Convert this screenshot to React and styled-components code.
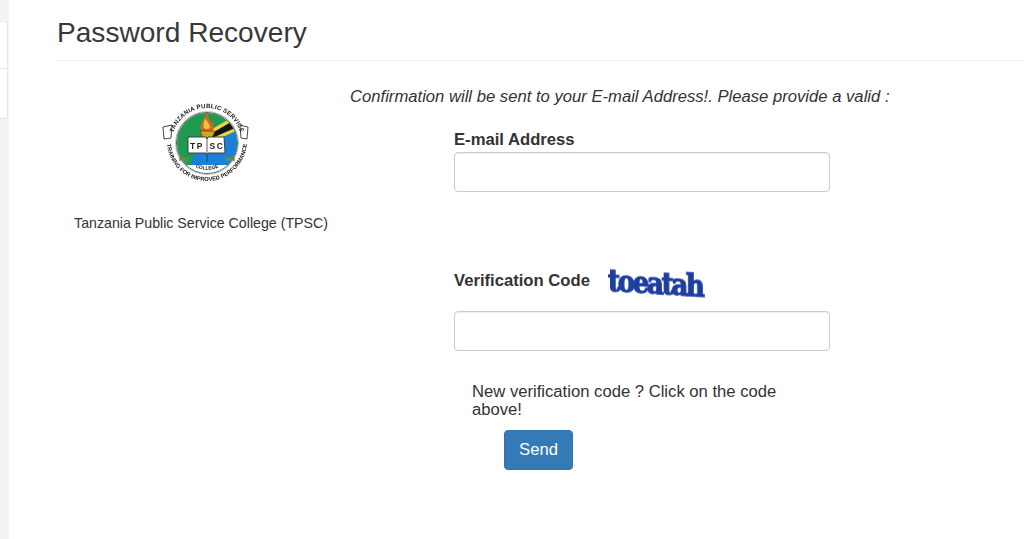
import React from "react";
import styled, { createGlobalStyle } from "styled-components";

const Global = createGlobalStyle`
  html, body { margin: 0; padding: 0; background: #fff; }
  body { font-family: "Liberation Sans", Arial, sans-serif; color: #333; font-size: 14px; overflow: hidden; }
  * { box-sizing: border-box; }
`;
const Page = styled.div`display: flex; width: 1024px; height: 539px; overflow: hidden;`;
const Sidebar = styled.aside`width: 9px; flex: none; background: #f3f3f3; padding-top: 21px;`;
const SideCard = styled.div`
  height: 98px; background: #fff; border: 1px solid #e8e8e8; border-left: 0; border-radius: 0 3px 3px 0;
  display: flex; flex-direction: column; width: 8px;
`;
const SideItem = styled.div`
  flex: 1;
  &:first-child { flex: 0 0 46px; }
  & + & { border-top: 1px solid #e8e8e8; }
`;
const Main = styled.main`flex: 1; padding: 0 0 0 48px; min-width: 0;`;
const Header = styled.header`height: 61px; border-bottom: 1px solid #eee; padding-top: 16px;`;
const Title = styled.h1`margin: 0; font-size: 28.1px; font-weight: 400; line-height: 34px; color: #383838;`;
const Columns = styled.div`display: flex;`;
const Brand = styled.div`
  width: 288px; flex: none; display: flex; flex-direction: column; align-items: center; padding-top: 39px;
`;
const LogoBox = styled.div`width: 90px; height: 92px; margin-left: 12px;`;
const College = styled.p`margin: 21px 0 0; font-size: 14.2px; line-height: 20px; color: #333; white-space: nowrap;`;
const FormColumn = styled.div`flex: 1; padding: 25px 0 0 5px;`;
const Lead = styled.p`margin: 0; font-size: 16.65px; line-height: 22px; font-style: italic; color: #333; white-space: nowrap;`;
const Form = styled.form`width: 376px; margin-left: 104px; padding-top: 21px;`;
const Label = styled.label`font-size: 16.65px; font-weight: 700; line-height: 22px; color: #333; display: block;`;
const Input = styled.input`
  display: block; width: 100%; height: 40px; margin-top: 1px; padding: 6px 12px; background: #fff;
  border: 1px solid #ccc; border-radius: 4px; box-shadow: inset 0 1px 1px rgba(0,0,0,.075);
  font: 16px "Liberation Sans", Arial, sans-serif;
`;
const CodeRow = styled.div`display: flex; align-items: center; margin-top: 70px; height: 38px; margin-bottom: 11px;`;
const Captcha = styled.span`
  margin-left: 18px; width: 96px; color: #1e3f9f; font: 700 29px/32px "DejaVu Serif", serif;
  letter-spacing: -2.6px; white-space: nowrap; transform: scaleX(.9) skewY(3deg); transform-origin: left center;
  -webkit-text-stroke: 1.3px #1e3f9f; filter: blur(.5px);
`;
const Hint = styled.p`margin: 32px 0 0 18px; width: 330px; font-size: 16.65px; line-height: 18px; color: #333;`;
const Send = styled.button`
  display: block; margin: 11px 0 0 50px; width: 69px; height: 40px; background: #337ab7; border: 1px solid #3074ad;
  border-radius: 4px; color: #fff; font: 16.65px "Liberation Sans", Arial, sans-serif;
`;

const Logo = () => (
  <svg width="90" height="92" viewBox="0 0 90 92" style={{ filter: "blur(.35px)" }}>
    <defs>
      <clipPath id="inner"><circle cx="45" cy="43" r="30" /></clipPath>
      <path id="top" d="M10 43 A35 35 0 0 1 80 43" />
      <path id="bot" d="M5 41 A40 40 0 0 0 85 41" />
      <path id="col" d="M26 62 A27 27 0 0 0 64 62" />
    </defs>
    <circle cx="45" cy="43" r="30.5" fill="#fff" stroke="#333" strokeWidth=".8" />
    <circle cx="45" cy="43" r="31.5" fill="none" stroke="#888" strokeWidth=".5" />
    <g clipPath="url(#inner)">
      <rect x="14" y="12" width="62" height="62" fill="#1f9a4e" />
      <path d="M40 38 L78 22 L78 75 L25 75 L30 60 Z" fill="#1c7fd8" />
      <path d="M36 40 L76 18 L78 26 L46 40 Z" fill="#14140f" />
      <path d="M40 35 L74 15 L76 18 L40 39 Z" fill="#e9d53c" />
      <path d="M48 39 L78 26 L78 29 L52 41 Z" fill="#e9d53c" />
      <path d="M14 65 H76 V74 H14 Z" fill="#fff" />
    </g>
    <path d="M45 12 C43 17 41 21 39 24 C38 29 40 33 45 33 C50 33 53 30 51 24 C50 22 49 23 48 21 C47 19 46 16 45 12 Z" fill="#d8661e" />
    <path d="M43 18 C42 23 41 25 42 28 C44 30 48 29 48 27 C48 24 45 22 43 18 Z" fill="#f0c23a" />
    <path d="M38 31 H53 L50 38 H41 Z" fill="#c8a92a" stroke="#7a2d10" strokeWidth=".7" />
    <path d="M26 37 H44 L45 39 L46 37 H62 L63 53 H46 L45 55 L44 53 H26 Z" fill="#fff" stroke="#333" strokeWidth=".9" />
    <path d="M45 39 V53 M45 55 V62" stroke="#333" strokeWidth=".8" />
    <text x="35" y="49" textAnchor="middle" fontFamily="Liberation Sans" fontWeight="700" fontSize="8.5" letterSpacing="1.6" fill="#222">TP</text>
    <text x="55" y="49" textAnchor="middle" fontFamily="Liberation Sans" fontWeight="700" fontSize="8.5" letterSpacing="1.6" fill="#222">SC</text>
    <path d="M18 55 l5 3 l5 -1 l-3 5 l-4 -2 l-4 1 Z M72 55 l-5 3 l-5 -1 l3 5 l4 -2 l4 1 Z" fill="#5d8f4a" />
    <path d="M1 27 L10 25 L9 38 L2 39 Z M86 27 L78 25 L79 38 L85 39 Z" fill="#fff" stroke="#333" strokeWidth=".9" />
    <text fontFamily="Liberation Sans" fontWeight="700" fontSize="6.2" fill="#222" letterSpacing=".2">
      <textPath href="#top" startOffset="50%" textAnchor="middle">TANZANIA PUBLIC SERVICE</textPath>
    </text>
    <text fontFamily="Liberation Sans" fontWeight="700" fontSize="5.7" fill="#222">
      <textPath href="#bot" startOffset="50%" textAnchor="middle">TRAINING FOR IMPROVED PERFORMANCE</textPath>
    </text>
    <text fontFamily="Liberation Sans" fontWeight="700" fontSize="5" fill="#222">
      <textPath href="#col" startOffset="50%" textAnchor="middle">COLLEGE</textPath>
    </text>
  </svg>
);

export default function App() {
  return (
    <Page>
      <Global />
      <Sidebar>
        <SideCard><SideItem /><SideItem /></SideCard>
      </Sidebar>
      <Main>
        <Header><Title>Password Recovery</Title></Header>
        <Columns>
          <Brand>
            <LogoBox><Logo /></LogoBox>
            <College>Tanzania Public Service College (TPSC)</College>
          </Brand>
          <FormColumn>
            <Lead>Confirmation will be sent to your E-mail Address!. Please provide a valid :</Lead>
            <Form onSubmit={(e) => e.preventDefault()}>
              <Label>E-mail Address</Label>
              <Input type="text" />
              <CodeRow>
                <Label>Verification Code</Label>
                <Captcha>toeatah</Captcha>
              </CodeRow>
              <Input type="text" />
              <Hint>New verification code ? Click on the code above!</Hint>
              <Send type="submit">Send</Send>
            </Form>
          </FormColumn>
        </Columns>
      </Main>
    </Page>
  );
}
